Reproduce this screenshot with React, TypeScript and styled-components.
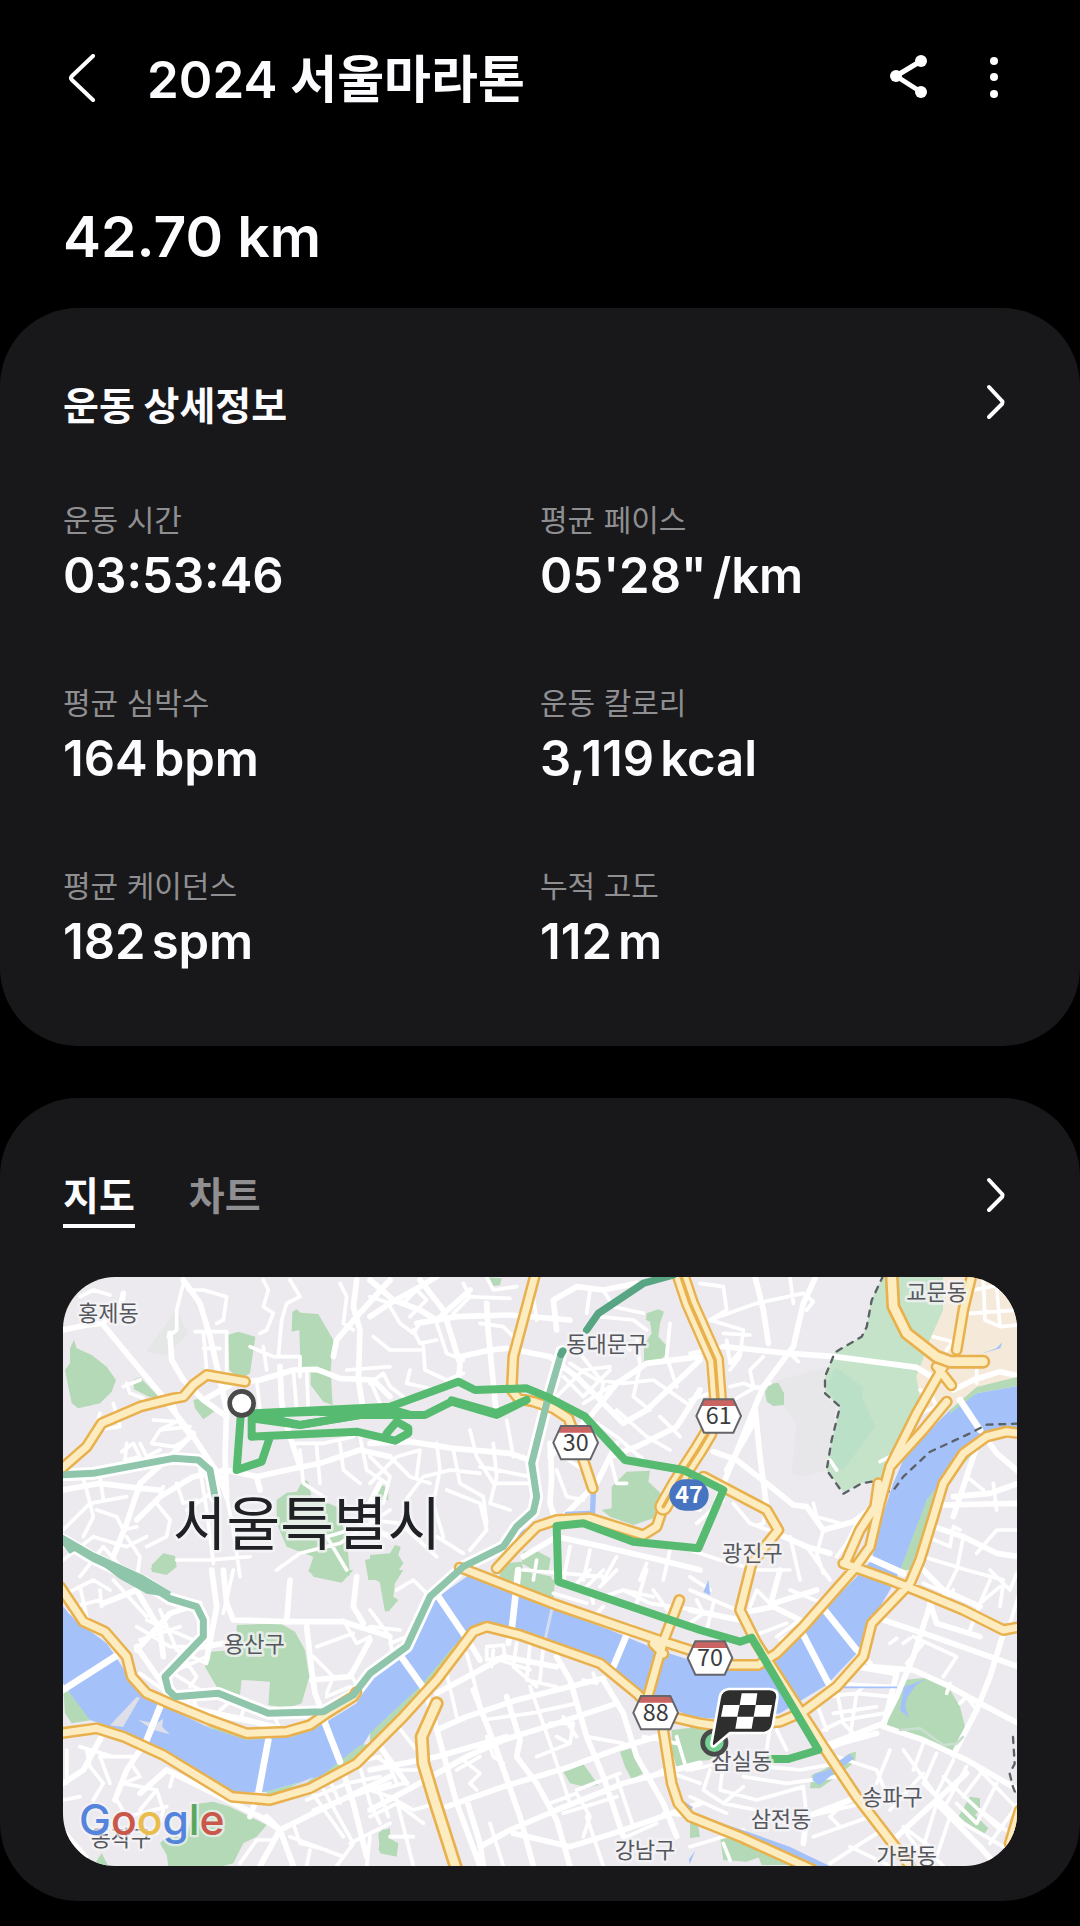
import React from 'react';
import styled, { createGlobalStyle } from 'styled-components';

const GlobalStyle = createGlobalStyle`
  *, *::before, *::after { box-sizing: border-box; }
  body {
    margin: 0;
    background: #000;
    color: #fcfcff;
    font-family: Inter, 'Noto Sans CJK KR', sans-serif;
  }
  button { font: inherit; color: inherit; background: none; border: 0; padding: 0; cursor: pointer; }
  h1, h2, p, dl, dt, dd { margin: 0; }
`;

const Page = styled.div`
  display: flex;
  flex-direction: column;
  padding-bottom: 25px;
  background: #000;
`;

const Header = styled.header`
  display: flex;
  align-items: center;
  height: 156px;
  padding: 0 62px 0 58px;
`;

const Title = styled.h1`
  flex: 1;
  margin-left: 41px;
  padding-top: 3px;
  font-size: 51px;
  line-height: 72px;
  font-weight: 600;
`;

const Actions = styled.div`
  display: flex;
  gap: 37px;
`;

const IconButton = styled.button<{ $size: number }>`
  display: flex;
  flex: none;
  width: ${(p) => p.$size}px;
  height: ${(p) => p.$size}px;
  svg { width: 100%; height: 100%; fill: none; stroke: #fff; stroke-linecap: round; stroke-linejoin: round; }
`;

const Summary = styled.section`
  padding: 51px 63px 41px;
`;

const Distance = styled.p`
  font-size: 57px;
  line-height: 60px;
  font-weight: 600;
`;

const Card = styled.section<{ $bottom: number }>`
  padding: 65px 63px ${(p) => p.$bottom}px;
  border-radius: 78px;
  background: #18181a;
  & + & { margin-top: 52px; }
`;

const CardHeader = styled.div<{ $space: number }>`
  display: flex;
  align-items: center;
  justify-content: space-between;
  margin-bottom: ${(p) => p.$space}px;
`;

const CardTitle = styled.h2`
  font-family: 'Noto Sans CJK KR', sans-serif;
  font-size: 39px;
  line-height: 60px;
  font-weight: 600;
`;

const Stats = styled.dl`
  display: grid;
  grid-template-columns: 1fr 1fr;
  row-gap: 77px;
`;

const Stat = styled.div`
  display: flex;
  flex-direction: column;
  gap: 6px;
`;

const StatLabel = styled.dt`
  font-size: 30px;
  line-height: 40px;
  color: #8f8f92;
`;

const StatValue = styled.dd`
  display: flex;
  gap: 6px;
  font-size: 49px;
  line-height: 60px;
  font-weight: 600;
`;

const Tabs = styled.div`
  display: flex;
  gap: 54px;
`;

const Tab = styled.button<{ $active?: boolean }>`
  border-bottom: 4px solid ${(p) => (p.$active ? '#fcfcff' : 'transparent')};
  color: ${(p) => (p.$active ? '#fcfcff' : '#8f8f92')};
  font-family: 'Noto Sans CJK KR', sans-serif;
  font-size: 39px;
  line-height: 61px;
  font-weight: 600;
`;

const MapFrame = styled.div`
  overflow: hidden;
  border-radius: 52px;
  background: #eceaee;
`;

const MapCanvas = styled.svg`
  display: block;
  width: 100%;
  height: auto;
`;

const Lines = styled.g<{ $color: string; $width: number }>`
  fill: none;
  stroke: ${(p) => p.$color};
  stroke-width: ${(p) => p.$width};
  stroke-linecap: round;
  stroke-linejoin: round;
`;

const Place = styled.text<{ $city?: boolean }>`
  font-family: 'Noto Sans CJK KR', sans-serif;
  font-size: ${(p) => (p.$city ? 175 : 66)}px;
  fill: ${(p) => (p.$city ? '#202125' : '#55575d')};
  stroke: rgba(245, 244, 247, 0.75);
  stroke-width: 16px;
  stroke-linejoin: round;
  paint-order: stroke;
  text-anchor: middle;
`;

const ShieldNumber = styled.text<{ $light?: boolean }>`
  font-family: 'Noto Sans CJK KR', sans-serif;
  font-size: 70px;
  font-weight: ${(p) => (p.$light ? 700 : 400)};
  fill: ${(p) => (p.$light ? '#fff' : '#3c3c3e')};
  text-anchor: middle;
`;

const Brand = styled.text`
  font-family: Inter, sans-serif;
  font-size: 128px;
  font-weight: 500;
  stroke: rgba(245, 244, 247, 0.7);
  stroke-width: 14px;
  stroke-linejoin: round;
  paint-order: stroke;
`;

/* ---------- map data ---------- */

type Tile = { x: number; y: number; parks: string; wide: string; thin: string };

const tiles: Tile[] = [
  {
    x: -9,
    y: -21,
    parks:
      'M42 210L50 235L95 255L140 290L168 330L155 365L120 400L55 415L35 400L15 300L30 280L30 235Z M220 330L240 322L300 385L270 382L222 358Z M400 390L425 385L462 425L430 448L405 415Z M503 195L535 185L586 200L570 310L540 330L508 300Z M697 125L710 118L722 128L775 132L820 210L812 300L818 405L790 395L752 345V310L722 300L718 180L695 185Z M650 690L680 668L710 665L730 628L745 635L755 680L830 710L860 800L870 915L840 930L745 905L760 860L680 830L650 760Z M275 885L310 850L345 858L350 890L320 915L275 905Z M945 665L965 645L985 655V690H945Z M915 870L960 860L990 870V930H925Z',
    wide:
      'M130 165L200 250L300 370L400 500L480 620L500 680 M9 180L80 165L125 160L180 120L190 70 M370 30L420 100L450 200L480 330L500 420L495 560L500 680 M330 190L335 270L370 330L430 390L500 440 M440 385L520 340L600 330L700 300L770 298L840 325L940 330L990 380 M820 260L830 210L890 140L990 30 M890 30L880 110L900 180L895 330L910 420 M660 290L665 400L690 500L720 590 M400 490L330 560L240 640L200 760L160 860 M590 620L680 600L780 580L900 540L990 560 M9 660L120 640L240 655L300 660 M230 750L300 680L400 620L500 600L590 620L600 660 M960 640L900 760L990 800',
    thin:
      'M60 80L100 60L150 75 M370 40L350 120L350 180L325 200 M385 60L430 60L500 80L490 150L470 160 M405 185H500V320 M430 185L440 300 M430 235H480 M610 30L625 60L610 110L640 130L620 180L600 190 M690 30L720 80L680 100L665 150L655 260 M610 230L620 300 M640 260H720V320 M570 230L640 260 M840 40L860 80L850 160L880 180 M930 80L990 100 M700 300L710 420 M740 300L745 420 M590 330L600 420 M860 300L990 290 M930 330L960 400 M120 430L105 480L180 470L160 400 M200 340L210 370L250 385 M190 350L240 330 M280 450L350 455L300 480L275 520L340 530L400 500 M300 480L390 470 M340 400L360 460L390 500 M200 520L195 570L240 560L220 520L185 545 M240 520L260 560L300 540 M60 600L80 660L100 740L70 800 M110 720L170 740L190 780L230 770 M130 690L120 620 M310 650L290 700L330 750L320 800L260 830 M350 640L370 700L410 690 M380 720L440 680L480 640 M9 780L90 700L200 680 M9 870L100 800L200 830L260 800 M200 800L240 860L230 930 M60 920L130 830L190 900 M350 870L450 870L570 860 M420 600L440 720L460 880 M500 680L520 780L540 920 M700 520L790 520L880 500 M720 540L730 640L790 680 M770 530L780 640 M840 520L850 600L900 640 M900 500L920 600L980 640 M650 900L720 850L840 820L990 720 M870 780L800 800L860 900',
  },
  {
    x: 921,
    y: -21,
    parks:
      'M345 22L395 25L390 45L370 48Z M830 130L865 118L882 125L870 160L865 200L888 225L885 255L868 278H822V225L845 190L840 155L828 150Z M725 650L770 605L840 602L835 635L872 670L850 745L790 765L720 740L695 720L725 715Z M460 845L490 838L542 865L535 905L500 905L455 880Z M15 655L35 645L52 660L40 690H10Z M0 855L60 850L75 825L92 830L85 855L100 880L80 910L40 930H0Z M400 880L455 875L460 900L545 920V930H385Z',
    wide:
      'M0 140L60 100L150 50L200 20 M150 30L220 120L270 280L265 340 M0 30L70 90L150 120L200 150L300 60 M350 100L355 190L370 340L380 440 M140 160L260 140L420 135L600 150 M270 260L360 240L410 235 M0 520L120 515L250 535L420 550L480 570 M440 240L540 260L620 320L700 400L760 460L830 420L990 270 M560 180L550 90L620 50L700 60L800 40 M540 560L600 500L660 440L740 340L830 280L990 260 M720 560L800 530L920 470L990 360 M540 520L545 620L540 700L560 760 M560 760L620 700L680 640L740 520 M460 860L560 800L700 830L870 870L990 900',
    thin:
      'M60 110L90 160L130 190L150 160 M100 100L140 60L170 90L120 140 M130 180L150 220L200 210 M160 230L165 300L230 330L280 310 M200 160L230 250L280 270 M0 340L40 310L60 350L100 380 M10 200L60 240L150 240 M280 40L300 80L250 130 M350 20L370 60L440 50 M330 160L400 170L430 200 M290 80L420 85 M490 80L500 150 M660 60L650 130 M700 60L730 110L820 130 M690 140L790 150L830 180 M720 190L780 240 M900 160L890 260L920 350 M800 200L810 290L790 380L840 420 M630 250L700 340L690 390 M600 280L680 330L760 340 M580 320L640 380L720 300 M560 380L640 300L720 290 M640 400L720 350 M760 340L850 330L950 400 M740 420L830 500L900 540 M680 460L740 500L820 570 M870 440L930 500 M0 560L60 620L40 700 M0 640L80 560L150 540L140 620 M60 560L120 620L180 640 M100 700L160 620L240 600L330 610 M200 520L210 600L190 700L220 800 M250 540L270 640L340 680L350 760 M300 480L320 560L370 640L480 640 M370 520L380 620L360 700L420 720 M230 660L330 700L350 780L300 840 M200 800L280 850 M330 590L480 620 M0 750L90 760L200 860 M120 300L110 340L200 360 M410 450L430 560 M560 600L590 680L640 690 M580 560L640 600 M720 560L740 640L770 640 M500 870L490 930 M600 830L580 930 M660 840L640 930 M740 860L700 930 M830 880L810 930 M460 900L700 920 M900 840L880 930 M640 450L690 480 M880 700L990 720',
  },
  {
    x: 1881,
    y: -21,
    parks: 'M225 365L240 342L265 338L282 370V405L250 408L230 395Z',
    wide:
      'M100 230L300 250L435 260L680 292L740 330 M375 25L340 100L310 230L220 350L195 410L130 570L80 690 M195 20L220 120L235 220 M195 410L210 560L230 710 M70 545L140 570L230 640L310 705L350 710L400 780 M195 450L110 600 M400 780L490 755L545 715 M260 790L350 830L420 850 M810 390L870 480L920 550L985 605 M790 360L850 330L930 305L985 318 M870 500L830 620L790 740 M760 705L985 700 M730 770L820 800L920 850L985 860 M790 680L900 670L985 640 M540 865L640 910',
    thin:
      'M30 40L100 50L110 120L60 150L160 180L150 260L120 300 M60 150L200 100L340 70 M340 70L370 95L350 120 M300 20L310 100 M100 190L180 195 M0 250L100 230 M110 210L120 280L160 230 M120 350L160 340L200 355L240 340 M130 390L200 350 M220 260L180 300L190 350 M0 390L60 370 M300 250L325 275 M420 570L440 600 M400 780L380 850L400 910 M440 860L470 820L500 760L540 740 M570 575L600 560 M690 360L720 370L740 410L690 430 M730 200L790 215L770 240 M850 60L930 45L985 40 M880 30L885 150L930 170L985 165 M840 130L985 120 M920 50L930 170 M860 300L860 340 M830 620L880 660 M910 640L920 720 M710 800L780 830L790 770L810 780 M700 860L830 900L940 930 M820 800L800 900 M860 850L920 780L985 780 M230 710L220 760L205 765 M130 700L180 760L260 790 M20 760L100 690 M0 840L90 870L200 900L300 900 M300 800L330 930 M350 830L420 930 M370 700L380 740L450 760',
  },
  {
    x: -9,
    y: 879,
    parks:
      'M270 -5H330L315 10L285 5Z M750 5L850 0H880L845 38L760 20Z M920 0H990V120L975 125L965 70L955 10Z M530 165L660 160L705 185L735 240L748 320L725 400L680 415L625 405L630 335L545 330L540 375L470 350L435 290L450 245L530 240Z M10 360L40 370L70 410L95 450L35 460L15 430Z M405 702L460 695L510 710L620 765L590 800L550 820L520 880L490 888H325L320 855L300 820L320 800L380 800Z M955 840L970 780L990 775V855Z M100 888L125 850L145 888Z M430 465L540 515L700 515L820 430L700 480L560 500Z',
    wide:
      'M455 0L470 110L440 270 M490 0L500 100L520 150L680 155L850 155L990 200 M690 30L680 155 M890 20L880 110L910 160 M740 170L755 300L765 370L800 460 M755 330L870 320L930 210 M370 240L490 220 M230 240L330 130L420 100 M130 100L230 60L300 180L310 260 M230 230L320 360 M9 360L165 260 M300 410L260 510L200 600L165 690 M625 510L595 670L570 740 M795 460L840 575L880 700L920 860 M345 385L420 420L560 450L640 470 M9 640L70 600L130 490 M240 670L320 600L400 640L520 700L600 740L660 780L700 888 M620 740L660 780L780 720L990 620 M600 888L660 780',
    thin:
      'M20 70L100 30L150 60 M40 110L120 90 M60 50L80 140 M120 60L125 110 M9 140L60 110 M160 30L260 140 M230 170L330 230L420 230 M300 120L350 240L440 280 M240 210L360 170 M260 150L400 210 M350 300L440 260 M340 310L420 360 M360 250L410 320L390 350 M240 310L310 360 M520 0L490 130 M530 380L480 420 M400 390L420 430L600 460 M560 390L540 450 M640 430L660 480 M850 150L890 220L930 200 M770 230L880 190 M760 260L820 320L800 370 M870 310L900 360 M800 380L870 350 M80 540L90 590L130 640L100 690 M20 540L20 640 M60 530L160 560 M150 640L120 560L220 560 M190 640L290 660L240 720 M170 690L200 740L320 710 M220 590L240 620L190 640 M290 660L310 720L290 790 M340 610L330 650 M9 780L80 860 M9 690L60 680 M750 660L850 800 M780 640L880 820L830 888 M740 690L860 640L960 620 M760 720L990 640 M800 610L840 700 M850 600L870 680 M900 590L930 700L960 760 M950 640L985 740 M880 580L960 560 M690 800L850 860 M700 760L720 820L800 840 M870 820L990 760 M930 800L920 888 M540 880L590 810L640 810 M740 888L750 840',
  },
  {
    x: 921,
    y: 879,
    parks:
      'M395 0L450 0L555 30L550 90L480 75L400 30Z M0 10L60 0L100 0L75 40L70 80L85 90L55 125L40 90L35 40L0 20Z M580 605L640 582L685 645L650 652L600 640Z M750 545L785 535L820 610L785 628L765 590Z M25 790L40 778L50 800L85 820L80 860L30 850Z M905 480L990 470V570L920 590L905 540Z M775 210L850 240L940 275H890L830 240Z M0 480L90 400L260 220L230 260L130 380L0 520Z',
    wide:
      'M445 0L425 180L415 220 M205 80L300 220L330 270 M90 255L165 360L190 440L260 700L330 888 M780 170L730 290 M0 720L130 650L290 560L400 510L560 460L740 400 M200 480L290 440L440 390L560 360L700 325 M0 600L200 560L410 500 M230 710L400 650L600 590L760 530L860 500 M290 690L330 820L340 888 M330 830L420 780L560 720L760 640L990 580 M310 360L380 540L450 740L490 888 M410 380L450 510L440 560L500 640L560 750L600 888 M560 260L600 330L650 500L700 620L760 800 M700 330L760 430L800 560L880 700L920 800 M200 370L330 300L400 260L560 290 M60 440L30 530L110 640 M430 790L600 830L730 790L990 700',
    thin:
      'M350 230L400 225L405 260L350 270Z M370 240L365 290 M230 310L260 440 M290 250L340 440 M440 220L430 290L500 350 M480 220L470 330L560 350 M520 230L510 330 M390 270L480 300 M340 450L480 430L620 400 M480 350L540 520L600 700 M540 460L610 460L600 520L560 500 M580 440L620 500 M280 570L330 610L300 640L320 660 M260 600L330 560 M350 500L370 560L400 580 M0 660L60 680L130 720L200 700 M60 440L140 540 M20 560L80 600L140 600 M40 540L80 640 M0 740L80 700L160 760 M80 690L130 888 M60 800L130 800 M30 660L100 640 M360 760L400 888 M540 700L620 670L660 740L640 800 M650 740L700 888 M620 660L750 610 M740 620L790 770 M580 730L740 680 M770 800L860 760 M840 620L880 600L990 640 M880 730L990 740 M640 330L680 340L670 310 M650 500L760 520 M820 500L920 520 M920 500L950 600 M0 120L60 200L70 280 M0 170L90 180 M80 60L130 30L180 80 M60 220L110 200 M560 30L640 60L700 0 M620 40L660 0 M690 50L740 0 M700 80L760 60L850 80 M830 0L800 100 M760 60L840 100L980 120 M850 60L900 130 M700 110L680 130 M550 70L650 100 M500 560L600 520 M660 60L670 100',
  },
  {
    x: 1881,
    y: 879,
    parks:
      'M640 330L710 323L775 350L810 410L825 470L785 550L590 465L600 430Z M805 740L840 680L870 685V720L855 735L895 775L880 795Z M0 470L60 480L90 540L60 570L0 575Z M365 615L400 600L480 550L498 545L495 575L440 620L390 655L360 655Z M90 800L190 820L240 850L170 875L100 870Z M205 860L250 845L300 885H215Z M330 420L420 350L400 390L320 430Z M0 740H20L30 800L0 805Z',
    wide:
      'M400 115L500 240L540 280 M335 185L415 340 M500 290L620 310L580 470 M725 90L670 260L620 380L580 460 M580 470L700 510L830 570L985 660 M540 290L670 300L780 350L870 400L985 460 M940 190L900 320L860 420L790 555 M580 150L730 200L985 290 M400 530L580 460 M700 0L760 60L870 110 M720 100L740 160L870 200 M400 540L450 520L560 490 M620 800L740 690L830 610 M740 700L870 830L920 888 M0 120L150 150 M150 130L250 110L330 150 M340 820L350 740L480 690 M270 0L240 110 M250 100L380 60',
    thin:
      'M0 60L140 120 M20 90L40 130L0 160 M70 100L50 180 M240 100L200 60L180 110 M0 20L60 60 M260 200L330 150 M210 190L290 160 M300 60L400 100 M270 210L320 180L380 130 M430 340L610 350 M400 380L500 370L600 380 M400 480L460 450L580 430 M440 360L460 460L500 500 M520 350L500 370L480 500 M430 430L560 410 M380 400L410 480 M260 480L290 540 M240 470L230 540 M100 580L90 660L200 690L340 650L350 740 M230 590L330 600L440 580 M160 620L290 640L440 620 M0 600L90 580 M60 600L40 660L100 700L160 650 M100 700L200 720 M0 680L110 730 M460 700L420 740L450 770 M350 740L520 700 M370 800L540 740 M420 880L560 790 M480 830L600 888 M440 560L560 600L600 700 M600 540L560 640 M700 610L600 720 M640 540L740 680 M700 520L670 600 M740 550L700 640 M790 570L740 670 M830 590L770 700 M880 600L820 680 M850 580L985 720 M920 640L860 760L800 700 M700 640L820 760L940 830 M760 620L930 780 M985 700L900 820 M740 700L700 830L760 888 M780 740L740 860 M650 790L720 888 M640 770L720 830 M870 720L960 790 M670 200L800 260L760 320 M650 280L700 220 M780 340L770 370 M860 420L830 380L810 400 M840 180L870 100L930 50 M900 0L960 60L980 10 M870 100L900 30 M940 40L930 110 M985 80L960 160 M800 0L760 80 M700 40L820 90 M760 100L790 60 M600 220L620 205 M640 220L660 205 M0 830L100 800L160 780 M100 820L120 870',
  },
];

const river =
  'M0 989L36 1029L131 1099L191 1189L231 1249L311 1289L441 1354L551 1389L691 1379L791 1334L881 1279L921 1209L981 1159L1036 1109L1111 969L1211 899L1251 875L1351 939L1481 999L1641 1059L1771 1114L1911 1159L2001 1179H2091L2141 1149L2211 1069L2381 899L2426 849L2451 739L2491 619L2521 549L2581 479L2661 399L2741 349L2862 327V464L2771 479L2691 539L2631 629L2591 669L2561 769L2531 839L2511 879L2481 939L2421 1039L2381 1129L2291 1224L2151 1309L2000 1329L1881 1319L1741 1249L1621 1149L1271 1049L1221 1069L1171 1109L1071 1229L921 1369L891 1419L771 1499L611 1544L501 1549L341 1439L171 1359L81 1329L21 1249L0 1219Z';

const riverGreen =
  'M2661 399L2741 330L2862 300V327L2741 349L2661 410Z M2771 479L2691 539L2591 669L2511 879H2550L2600 719L2650 610L2771 490Z M771 1499L891 1405L921 1400L881 1459L741 1534L611 1560V1544Z M1171 1109L1071 1229L921 1369V1409L1121 1209L1221 1069Z';

const ponds =
  'M1506 704L1581 701L1583 645L1599 650L1596 725L1506 712Z M1390 752L1366 790L1341 812L1355 780Z M1921 945L1936 909L1942 955Z M2248 1509L2256 1490L2290 1482L2330 1450L2360 1431L2372 1445L2320 1482L2270 1525Z M2522 1230L2590 1206L2560 1224L2532 1262L2527 1290L2538 1322L2511 1300L2518 1260Z M1884 1610L2041 1660L2180 1709L2300 1767H2250L2041 1680Z M1878 1747L1897 1720L1880 1762Z M2754 230L2800 214L2818 196L2812 214Z M1850 1565L1890 1590L1885 1600L1855 1592Z';

const yellowRoads = [
  'M-9 579L71 509L116 439L231 389L331 364L361 359L391 324L431 294L546 314',
  'M-9 929L61 1034L126 1064L191 1139L206 1199L251 1249L331 1284L441 1329L551 1369L671 1364L741 1344L791 1309L871 1259L880 1245',
  'M1190 872L1211 879L1351 934L1481 984L1641 1039L1801 1094L1911 1129L2001 1164H2086L2141 1129L2221 1049L2371 879L2421 809L2451 679L2481 569L2561 409L2641 269',
  'M2481 569L2581 459L2651 374',
  'M1301 874L1361 809L1421 749L1481 729L1581 724L1661 749L1741 774L1781 749L1801 689L1841 619L1906 519',
  'M1416 -5L1351 239L1346 339L1366 365L1411 374L1471 394L1516 424L1541 489L1589 634',
  'M-9 1369L101 1354L181 1379L301 1434L506 1559L621 1569L741 1534L881 1459L1021 1319L1121 1209L1231 1064L1271 1049L1371 1074L1611 1159L1721 1249L1781 1309L1911 1339L1981 1349L2151 1334L2221 1304L2321 1229L2401 1139L2426 1039L2541 919L2571 849L2611 719L2641 619L2701 529L2771 479L2831 464L2871 469',
  'M1801 1359L1826 1519L1846 1579L1881 1619L2031 1679L2251 1779',
  'M1849 969L1801 1094L1756 1254',
  'M1771 1100L1801 1130',
  'M1921 599L2111 699L2146 759L2066 859L2031 999L2081 1099L2281 1409L2381 1559L2481 1689L2541 1767',
  'M2341 859L2481 909L2581 949L2701 999L2821 1059L2870 1050',
  'M2726 -5L2701 99L2681 219',
  'M2621 269L2665 325',
  'M2446 619L2436 690L2390 760L2351 849',
  'M-5 90L30 20',
  'M2870 1600L2840 1700',
];

const wideYellowRoads = [
  'M2486 -5L2491 89L2531 169L2621 239L2661 254H2761',
  'M1121 1279L1076 1379L1081 1459L1111 1559L1181 1779',
];

const twinYellowRoads = ['M1853 -5L1881 79L1956 249L1966 379L1936 469L1906 519L1841 619L1801 689'];

const greenRoads = [
  'M-9 594L91 589L331 544L406 549L441 579L456 659',
  'M-9 784L91 844L241 914L321 965L401 989L421 1029V1079L306 1199L316 1239L336 1259L466 1249L616 1309L781 1304L871 1254L921 1189L1031 1109L1101 959L1201 869L1321 809L1361 749L1411 704L1421 659L1406 559L1451 379L1496 224',
];

const bridges =
  'M0 1239L156 1139 M291 1289L251 1389 M616 1389L586 1549 M786 1339L831 1454 M1011 1134L1086 1239 M1126 959L1221 1099 M1366 879L1346 1059 M1701 1049L1651 1169 M2281 994L2381 1119 M2216 1064L2296 1219 M2691 369L2751 459 M2421 844L2521 889';

const route =
  'M536 379L521 579L596 554L621 479 M566 409V479L881 464L996 491L1036 469V454L1001 434L971 469 M566 409L981 389L1186 314L1236 339L1391 334L1451 359L1566 419L1686 549L1861 579L1981 639L1906 814L1711 794L1561 739L1481 747L1486 914L1911 1059L2031 1094L2066 1082L2266 1419L2176 1446H2121 M566 424L711 444L891 414H1086L1166 374L1301 414L1391 369L1301 408L1166 370';

const places = [
  { name: '홍제동', x: 136, y: 133 },
  { name: '동대문구', x: 1631, y: 226 },
  { name: '교문동', x: 2621, y: 68 },
  { name: '광진구', x: 2068, y: 853 },
  { name: '용산구', x: 574, y: 1126 },
  { name: '잠실동', x: 2036, y: 1475 },
  { name: '삼전동', x: 2154, y: 1651 },
  { name: '송파구', x: 2488, y: 1583 },
  { name: '가락동', x: 2531, y: 1760 },
  { name: '강남구', x: 1746, y: 1743 },
  { name: '동작구', x: 174, y: 1708 },
];

const shields = [
  { no: '30', x: 1538, y: 497 },
  { no: '61', x: 1967, y: 417 },
  { no: '70', x: 1941, y: 1143 },
  { no: '88', x: 1778, y: 1307 },
];

const stats = [
  { label: '운동 시간', value: '03:53:46' },
  { label: '평균 페이스', value: '05\'28"', unit: '/km' },
  { label: '평균 심박수', value: '164', unit: 'bpm' },
  { label: '운동 칼로리', value: '3,119', unit: 'kcal' },
  { label: '평균 케이던스', value: '182', unit: 'spm' },
  { label: '누적 고도', value: '112', unit: 'm' },
];

function ForwardButton({ label }: { label: string }) {
  return (
    <IconButton $size={42} type="button" aria-label={label}>
      <svg viewBox="0 0 42 42" strokeWidth="4">
        <path d="M14 5L27 19Q28 20 27 22L14 35" />
      </svg>
    </IconButton>
  );
}

function Shield({ no, x, y }: { no: string; x: number; y: number }) {
  return (
    <g transform={`translate(${x} ${y})`}>
      <path d="M-44 -50H44L67 0L44 50H-44L-67 0Z" fill="#fff" />
      <path d="M-44 -50H44L53 -30H-53Z" fill="#c96463" />
      <path d="M-44 -50H44L67 0L44 50H-44L-67 0Z" fill="none" stroke="#66666a" strokeWidth="6" />
      <ShieldNumber y={24}>{no}</ShieldNumber>
    </g>
  );
}

function Roads({ paths, casing, fill }: { paths: string[]; casing: number; fill: number }) {
  const d = paths.join(' ');
  return (
    <>
      <Lines $color="#e9b14d" $width={casing}>
        <path d={d} />
      </Lines>
      <Lines $color="#fdecbf" $width={fill}>
        <path d={d} />
      </Lines>
    </>
  );
}

function CourseMap() {
  return (
    <MapCanvas viewBox="0 0 2862 1767" role="img" aria-label="서울마라톤 경로 지도">
      <path
        d="M2461 -5L2426 70L2411 150L2396 179L2316 226L2286 299L2286 349L2331 389L2306 489L2291 579L2341 645L2396 619L2456 609L2491 549L2561 409L2660 260L2650 170L2700 -5Z"
        fill="#c4e3c9"
      />
      <path d="M2316 270L2400 330L2396 356L2436 450L2340 580L2300 560L2331 389L2290 330Z" fill="#b9dfc8" opacity="0.8" />
      <path d="M2640 -5H2862V310L2740 340L2661 389L2580 410L2560 300L2600 190L2640 100Z" fill="#f5ead9" />
      <path d="M2110 320L2290 270L2280 350L2320 390L2290 580L2220 600L2185 590L2200 440Z" fill="#e5e5e6" opacity="0.6" />
      <path d="M250 225L340 95L375 170L310 235Z" fill="#e3e4e3" opacity="0.7" />
      {tiles.map((t) => (
        <path key={`${t.x},${t.y}`} transform={`translate(${t.x} ${t.y})`} d={t.parks} fill="#b4d9b6" />
      ))}
      {tiles.map((t) => (
        <g key={`${t.x},${t.y}`} transform={`translate(${t.x} ${t.y})`}>
          <Lines $color="#fff" $width={11}>
            <path d={t.thin} />
          </Lines>
          <Lines $color="#fff" $width={17}>
            <path d={t.wide} />
          </Lines>
        </g>
      ))}
      <path d={river} fill="#a4c2f9" />
      <path d={riverGreen} fill="#b4d9b6" />
      <path d={ponds} fill="#a4c2f9" />
      <path d="M141 1345L221 1260L231 1262L180 1350Z M226 1329L280 1340L300 1325L298 1350L320 1372L270 1358Z M681 1530L750 1500L730 1520Z" fill="#dfdfea" />
      <Lines $color="#fff" $width={20}>
        <path d={bridges} />
      </Lines>
      <Lines $color="#d3dcf3" $width={9}>
        <path d="M1466 999L1446 1089" />
      </Lines>
      <Lines $color="#a4c2f9" $width={5}>
        <path d="M2330 1231H2500" />
      </Lines>
      <Lines $color="#c9dfcf" $width={8}>
        <path d="M2511 1359L2571 1354L2641 1404L2681 1400L2700 1380" />
      </Lines>
      <Lines $color="#5c6166" $width={7} strokeDasharray="18 20">
        <path d="M2461 -5L2426 70L2411 150L2396 179L2316 226L2286 299V349L2331 389L2306 489L2291 579L2341 650L2396 619L2456 609L2471 645L2491 640L2521 599L2600 525L2721 469L2771 443L2862 440" />
        <path d="M2850 1380L2855 1460L2840 1490L2850 1530L2862 1560" />
      </Lines>

      <Lines $color="#fff" $width={38}>
        <path d={greenRoads.join(' ')} />
      </Lines>
      <Roads paths={yellowRoads} casing={36} fill={21} />
      <Roads paths={wideYellowRoads} casing={42} fill={26} />
      <Roads paths={twinYellowRoads} casing={54} fill={40} />
      <Lines $color="#e9b14d" $width={11}>
        <path d={twinYellowRoads.join(' ')} />
      </Lines>
      <Lines $color="#8fc5aa" $width={21}>
        <path d={greenRoads.join(' ')} />
      </Lines>
      <path d="M-9 768L91 826L241 895L325 945L315 960L251 950L170 905L91 845L40 820L20 830L-9 795Z" fill="#8fc5aa" />
      <Lines $color="#58a584" $width={22}>
        <path d="M1494 232L1500 222 M1571 159L1606 109L1741 19L1830 -6" />
      </Lines>

      <Lines $color="#56bb70" $width={24} strokeLinecap="butt">
        <path d={route} />
      </Lines>
      <path d="M570 400L985 385L1086 414L891 426L711 455L570 430Z M660 420L711 432L800 418L760 416Z" fill="#56bb70" fillRule="evenodd" />

      {places.map((p) => (
        <Place key={p.name} x={p.x} y={p.y}>
          {p.name}
        </Place>
      ))}
      <Place $city x={732} y={805}>
        서울특별시
      </Place>

      {shields.map((s) => (
        <Shield key={s.no} {...s} />
      ))}
      <rect x="1819" y="607" width="118" height="94" rx="47" fill="#4674c0" />
      <ShieldNumber $light x={1878} y={679}>
        47
      </ShieldNumber>

      <circle cx="536" cy="379" r="36" fill="#fff" stroke="#4a4a4b" strokeWidth="14" />
      <circle cx="1954" cy="1397" r="35" fill="#74d394" stroke="#4a4a4b" strokeWidth="14" />
      <path
        d="M1998 1236H2120Q2146 1238 2143 1262L2130 1342Q2126 1366 2104 1368H2001L1954 1408Q1944 1410 1946 1396L1970 1262Q1974 1238 1998 1236Z"
        fill="#2e2e2e"
        stroke="#fff"
        strokeWidth="8"
        strokeLinejoin="round"
      />
      <path
        d="M2036 1249H2083L2078 1284H2030Z M1981 1284H2030L2023 1319H1974Z M2078 1284H2127L2120 1319H2072Z M2023 1319H2072L2066 1355H2017Z"
        fill="#fff"
      />

      <Brand x={48} y={1674}>
        <tspan fill="#5584dd">G</tspan>
        <tspan fill="#c9574a">o</tspan>
        <tspan fill="#e9bd4c">o</tspan>
        <tspan fill="#5584dd">g</tspan>
        <tspan fill="#5aa65f">l</tspan>
        <tspan fill="#c9574a">e</tspan>
      </Brand>
    </MapCanvas>
  );
}

export default function App() {
  return (
    <Page>
      <GlobalStyle />
      <Header>
        <IconButton $size={48} type="button" aria-label="뒤로">
          <svg viewBox="0 0 48 48" strokeWidth="4">
            <path d="M35 2L14 22Q12 24 14 26L35 46" />
          </svg>
        </IconButton>
        <Title>2024 서울마라톤</Title>
        <Actions>
          <IconButton $size={48} type="button" aria-label="공유">
            <svg viewBox="0 0 48 48" strokeWidth="5">
              <path d="M36 7L11 22L36 38" />
              <g fill="#fff" stroke="none">
                <circle cx="36" cy="7" r="6" />
                <circle cx="11" cy="22" r="6" />
                <circle cx="36" cy="38" r="6" />
              </g>
            </svg>
          </IconButton>
          <IconButton $size={48} type="button" aria-label="더보기">
            <svg viewBox="0 0 48 48">
              <g fill="#fff" stroke="none">
                <circle cx="24" cy="7" r="4" />
                <circle cx="24" cy="23" r="4" />
                <circle cx="24" cy="40" r="4" />
              </g>
            </svg>
          </IconButton>
        </Actions>
      </Header>

      <main>
        <Summary>
          <Distance>42.70 km</Distance>
        </Summary>

        <Card $bottom={74}>
          <CardHeader $space={67}>
            <CardTitle>운동 상세정보</CardTitle>
            <ForwardButton label="운동 상세정보 보기" />
          </CardHeader>
          <Stats>
            {stats.map((s) => (
              <Stat key={s.label}>
                <StatLabel>{s.label}</StatLabel>
                <StatValue>
                  <span>{s.value}</span>
                  {s.unit && <span>{s.unit}</span>}
                </StatValue>
              </Stat>
            ))}
          </Stats>
        </Card>

        <Card $bottom={35}>
          <CardHeader $space={49}>
            <Tabs role="tablist">
              <Tab $active type="button" role="tab" aria-selected="true">
                지도
              </Tab>
              <Tab type="button" role="tab" aria-selected="false">
                차트
              </Tab>
            </Tabs>
            <ForwardButton label="지도 크게 보기" />
          </CardHeader>
          <MapFrame>
            <CourseMap />
          </MapFrame>
        </Card>
      </main>
    </Page>
  );
}
